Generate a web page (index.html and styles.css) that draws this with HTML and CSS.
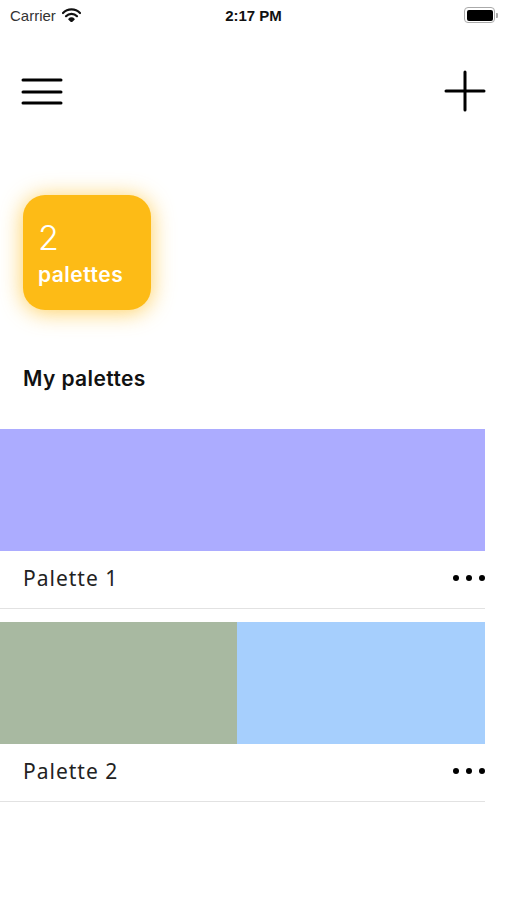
FILE: index.html
```html
<!DOCTYPE html>
<html lang="en">
<head>
  <meta charset="UTF-8" />
  <title>Palettes</title>
  <link rel="stylesheet" href="styles.css">
</head>
<body>
  <header class="status-bar">
    <div class="carrier">
      Carrier
      <svg width="19" height="14" viewBox="0 0 19 14">
        <path d="M1 5 A12 12 0 0 1 18 5" fill="none" stroke="#111" stroke-width="2.2" stroke-linecap="round"/>
        <path d="M4 8.2 A7.5 7.5 0 0 1 15 8.2" fill="none" stroke="#111" stroke-width="2.2" stroke-linecap="round"/>
        <path d="M7 11.2 A3.4 3.4 0 0 1 12 11.2 L9.5 13.6 Z" fill="#111" stroke="#111" stroke-width="1.5" stroke-linejoin="round"/>
      </svg>
    </div>
    <div class="time">2:17 PM</div>
    <div class="battery">
      <span class="battery-body"><span class="battery-fill"></span></span>
      <span class="battery-cap"></span>
    </div>
  </header>

  <nav class="toolbar">
    <svg width="42" height="30" viewBox="0 0 42 30">
      <path d="M2 4 H40 M2 16 H40 M2 27 H40" stroke="#000" stroke-width="3" stroke-linecap="round"/>
    </svg>
    <svg width="42" height="42" viewBox="0 0 42 42">
      <path d="M21 2 V40 M2 21 H40" stroke="#000" stroke-width="3" stroke-linecap="round"/>
    </svg>
  </nav>

  <section class="summary">
    <div class="summary-card">
      <span class="count">2</span>
      <span class="count-label">palettes</span>
    </div>
  </section>

  <h2 class="section-title">My palettes</h2>

  <ul class="palette-list">
    <li class="palette">
      <div class="swatches">
        <div class="swatch" style="background:#acacff"></div>
      </div>
      <div class="palette-info">
        <span class="palette-name">Palette 1</span>
        <span class="more"><i></i><i></i><i></i></span>
      </div>
    </li>
    <li class="palette">
      <div class="swatches">
        <div class="swatch" style="background:#a8b9a1; flex-grow:237"></div>
        <div class="swatch" style="background:#a6cffd; flex-grow:248"></div>
      </div>
      <div class="palette-info">
        <span class="palette-name">Palette 2</span>
        <span class="more"><i></i><i></i><i></i></span>
      </div>
    </li>
  </ul>
</body>
</html>
```

FILE: styles.css
```css
:root {
  --color-accent: #fdbb16;
  --color-text: #111;
  --color-border: #e2e2e2;
}

body {
  margin: 0;
  background: white;
  color: var(--color-text);
  font-family: Inter, "Noto Sans", "Liberation Sans", sans-serif;
}

.status-bar {
  height: 30px;
  display: flex;
  align-items: center;
  justify-content: space-between;
  padding: 0 9px 0 10px;
  font-family: "Liberation Sans", Arial, sans-serif;
  font-size: 15px;
  position: relative;
}

.carrier {
  display: flex;
  align-items: center;
  gap: 6px;
  color: #333;
}

.time {
  position: absolute;
  left: 0;
  right: 0;
  text-align: center;
  font-weight: bold;
  color: #111;
}

.battery {
  display: flex;
  align-items: center;
  gap: 1px;
}

.battery-body {
  width: 26px;
  height: 11px;
  border: 1px solid #aaa;
  border-radius: 4px;
  padding: 1.5px;
  display: flex;
}

.battery-fill {
  flex: 1;
  background: #000;
  border-radius: 2px;
}

.battery-cap {
  width: 2px;
  height: 5px;
  background: #aaa;
  border-radius: 0 1px 1px 0;
}

.toolbar {
  display: flex;
  align-items: center;
  justify-content: space-between;
  padding: 40px 21px 0 21px;
  height: 42px;
}

.summary {
  padding: 83px 23px 0;
}

.summary-card {
  width: 128px;
  height: 115px;
  box-sizing: border-box;
  padding: 24px 15px 0;
  border-radius: 22px;
  background: var(--color-accent);
  box-shadow: 0 2px 22px rgb(253 187 22 / 0.7);
  color: white;
  display: flex;
  flex-direction: column;
}

.count {
  font-size: 34px;
  font-weight: 300;
  line-height: 38px;
}

.count-label {
  margin-top: 4px;
  font-size: 21px;
  font-weight: 600;
  letter-spacing: 0.5px;
  line-height: 28px;
}

.section-title {
  margin: 54px 23px 0;
  font-size: 21px;
  font-weight: 600;
  letter-spacing: 0.4px;
  line-height: 30px;
}

.palette-list {
  list-style: none;
  margin: 35px 22px 0 0;
  padding: 0;
}

.palette {
  border-bottom: 1px solid var(--color-border);
  margin-bottom: 13px;
}

.swatches {
  display: flex;
  height: 122px;
}

.swatch {
  flex: 1;
}

.palette-info {
  display: flex;
  align-items: center;
  justify-content: space-between;
  height: 53px;
  padding-bottom: 4px;
  padding-left: 23px;
}

.palette-name {
  font-family: "Noto Sans", sans-serif;
  font-size: 21px;
  letter-spacing: 1px;
  color: #222;
}

.more {
  display: flex;
  gap: 7px;
}

.more i {
  width: 6px;
  height: 6px;
  border-radius: 50%;
  background: #000;
}
```
